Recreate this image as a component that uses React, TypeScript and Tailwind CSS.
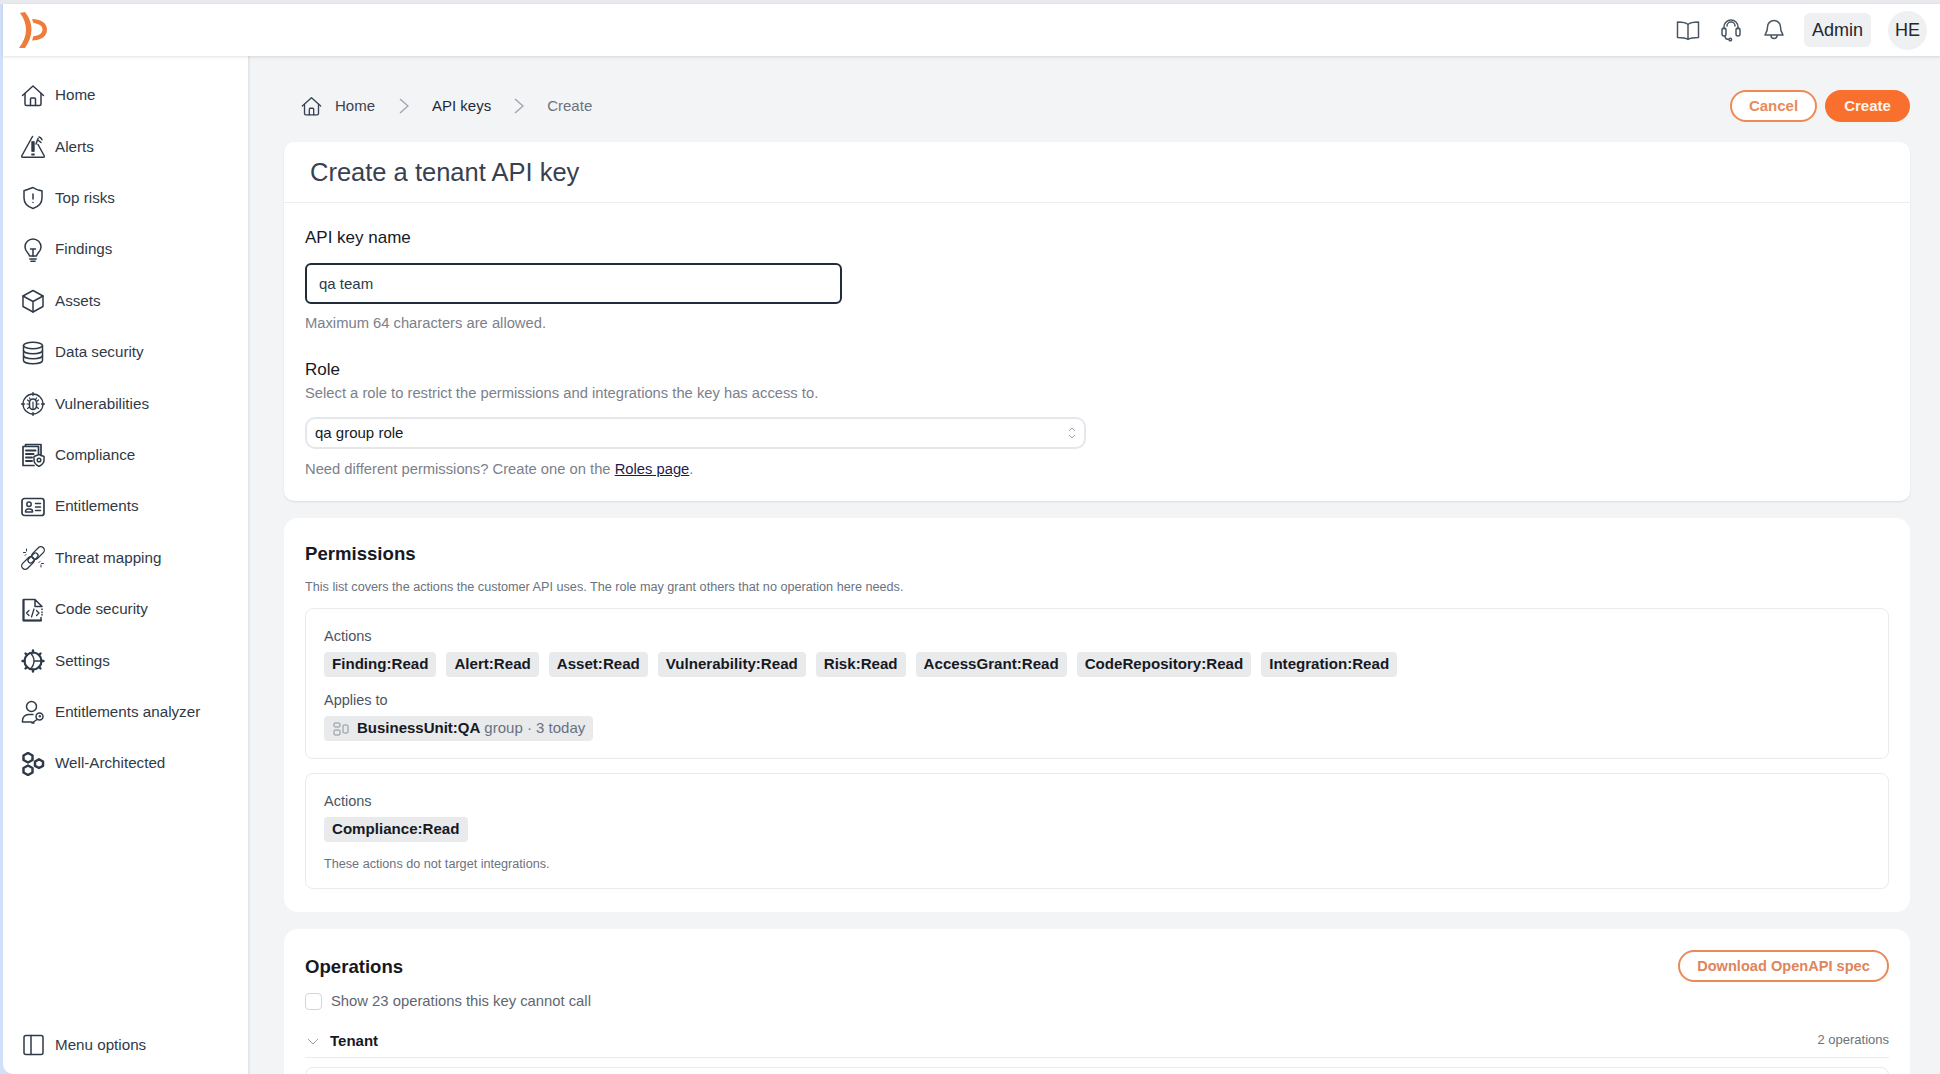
import type { ReactNode } from "react"

const font = "font-['Liberation_Sans',Arial,sans-serif]"

function Ico({ children, size = 24, cls = "text-[#2f3a48]", sw = 1.5 }: { children: ReactNode, size?: number, cls?: string, sw?: number }) {
    return (
        <svg width={size} height={size} viewBox="0 0 24 24" fill="none" stroke="currentColor" strokeWidth={sw} strokeLinecap="round" strokeLinejoin="round" className={`shrink-0 ${cls}`}>
            {children}
        </svg>
    )
}

const homePath = (
    <>
        <path d="M1.5 11.5 12 2l10.5 9.5" />
        <path d="M4 9.5V20a1.5 1.5 0 0 0 1.5 1.5h13A1.5 1.5 0 0 0 20 20V9.5" />
        <path d="M9.5 21.5V15a1 1 0 0 1 1-1h3a1 1 0 0 1 1 1v6.5" />
    </>
)

const navItems: { label: string, icon: ReactNode }[] = [
    { label: "Home", icon: homePath },
    {
        label: "Alerts", icon: <>
            <path d="M11.5 1.500.7 21a.9.9 0 0 0 .8 1.300h21a.9.9 0 0 0 .8-1.300L17 9.500" />
            <path d="M11.200 7v9M12.800 7v9M11 19.500h2" strokeWidth={1.8} />
            <path d="M15 9l2-5.500M17.500 5.500l2.500 2M18 2c1.200.3 2.400 1.300 3 2.800" />
        </>
    },
    {
        label: "Top risks", icon: <>
            <path d="M12 1.500 3 4.800V12c0 5 4 8.800 9 10.500 5-1.700 9-5.500 9-10.500V4.800c-3.500 0-6-1.300-9-3.300Z" />
            <path d="M12 8v5M12 16.500v.1" />
        </>
    },
    {
        label: "Findings", icon: <>
            <path d="M8.500 18c0-2.500-4.500-4-4.500-9a8 8 0 0 1 16 0c0 5-4.500 6.500-4.500 9Z" />
            <path d="M8.800 21h6.400M10 23.300h4M9.500 11h5M12 11v7" />
        </>
    },
    {
        label: "Assets", icon: <>
            <path d="M12 1.500 2 7v10.500L12 23l10-5.500V7Z" />
            <path d="M2 7l10 5.500L22 7M12 12.500V23" />
        </>
    },
    {
        label: "Data security", icon: <>
            <ellipse cx="12" cy="4.500" rx="9.500" ry="3.200" />
            <path d="M2.500 4.500v15c0 1.800 4.200 3.200 9.500 3.200s9.500-1.400 9.500-3.200v-15" />
            <path d="M2.500 9.500c0 1.800 4.200 3.200 9.500 3.200s9.500-1.400 9.500-3.200M2.500 14.500c0 1.800 4.200 3.200 9.500 3.200s9.500-1.400 9.500-3.200" />
        </>
    },
    {
        label: "Vulnerabilities", icon: <>
            <circle cx="12" cy="12" r="10" strokeWidth={1.3} />
            <path d="M12 .5v3M12 20.500v3M.5 12h3M20.500 12h3" strokeWidth={1.3} />
            <path d="M8.500 10.500a3.500 3.500 0 0 1 7 0V14a3.500 3.500 0 0 1-7 0Z" />
            <path d="M9.500 7.800 8.500 6M14.500 7.800l1-1.800M12 10v7.500M8.500 12H6M15.500 12H18M8.500 15 6.500 16.500M15.500 15l2 1.500M8.500 9.500 6.500 8M15.500 9.500l2-1.500" strokeWidth={1.2} />
        </>
    },
    {
        label: "Compliance", icon: <>
            <path d="M4.500 1.500H20v11M4.500 1.500v2M13 22.500H2V3.500h15.500v7.500" strokeWidth={1.7} />
            <path d="M5 7.500h9.500M5 11h7.500M5 14.500h6M5 18h6" strokeWidth={2} />
            <path d="M18 11.500l5 2v4c0 2.500-2.500 4.500-5 6-2.500-1.500-5-3.500-5-6v-4Z" />
            <circle cx="18" cy="17" r="1.800" />
        </>
    },
    {
        label: "Entitlements", icon: <>
            <rect x="1" y="3.500" width="22" height="17" rx="2.500" strokeWidth={1.7} />
            <circle cx="8" cy="9.300" r="2.200" />
            <path d="M4.500 17v-.5a2.500 2.500 0 0 1 2.500-2.500h2a2.500 2.500 0 0 1 2.500 2.500v.5ZM14.500 8.500h5M14.500 12h5M14.500 15.500h5" />
        </>
    },
    {
        label: "Threat mapping", icon: <>
            <rect x="13.500" y="-.5" width="7" height="15" rx="3.500" transform="rotate(45 17 7)" strokeWidth={1.3} />
            <rect x="3.500" y="9.500" width="7" height="15" rx="3.500" transform="rotate(45 7 17)" strokeWidth={1.3} />
            <rect x="9.500" y="6" width="5" height="12" rx="2.500" transform="rotate(45 12 12)" strokeWidth={1.3} />
            <path d="M5.500 3v2M2.500 6.500h2M4 9.500l1-1M20 21v-2M22.500 17.500h-2M19 15.500l-1 1" strokeWidth={1} />
        </>
    },
    {
        label: "Code security", icon: <>
            <path d="M14 1.500H2.500v21H20v-3M14 1.500l7 7H14ZM21 11v.5M21 14v.5M21 16.500v.5" />
            <path d="M8 12.500l-2.500 2.500L8 17.500M15.500 12.500l2.500 2.500-2.500 2.500M13 11l-2.500 8" strokeWidth={1.3} />
            <path d="M2.500 22.500H20M2.500 2v20.500" strokeWidth={2} />
        </>
    },
    {
        label: "Settings", icon: <>
            <circle cx="12" cy="12" r="8.500" strokeWidth={2.200} />
            <path d="M12 1.500V3.500M12 20.500v2M1.500 12h2M20.500 12h2M4.500 4.500 6 6M18 18l1.500 1.500M4.500 19.500 6 18M18 6l1.500-1.500" strokeWidth={2.400} />
            <path d="M9 3.800c3 2.500 4 5.200 4 8.200s-1 5.700-4 8.200M13 12h7.500" strokeWidth={1.400} />
        </>
    },
    {
        label: "Entitlements analyzer", icon: <>
            <circle cx="10.500" cy="6.500" r="5" />
            <path d="M12 14.500H7.500A6 6 0 0 0 1.500 20.500v1.500H11" />
            <circle cx="18.500" cy="16.500" r="3.500" />
            <path d="M16 19.500 11 23h2" />
            <circle cx="18.800" cy="16.200" r=".5" />
        </>
    },
    {
        label: "Well-Architected", icon: <>
            <path d="M7 1 11.500 3.500v4.500L7 10.500 2.500 8V3.500Z" strokeWidth={2.500} />
            <path d="M7 13.500l4.500 2.500v4.500L7 23l-4.500-2.500V16Z" strokeWidth={2.500} />
            <path d="M18 7.300l4 2.200v4.300l-4 2.200-4-2.200V9.500Z" strokeWidth={2.500} />
        </>
    },
]

const actions = ["Finding:Read", "Alert:Read", "Asset:Read", "Vulnerability:Read", "Risk:Read", "AccessGrant:Read", "CodeRepository:Read", "Integration:Read"]

function Chip({ children }: { children: ReactNode }) {
    return <span className="flex h-[25px] items-center rounded-[4px] bg-[#e9eaec] px-2 text-[15.1px] font-bold text-[#16191f]">{children}</span>
}

function Logo() {
    return (
        <svg width="30" height="36" viewBox="0 0 30 36" fill="#ee7c3c">
            <path d="M2 1 7 0c4 5 6.500 11 6.500 17.500S11 30 7 36H1c4.500-6 7-12 7-18S6 6 2 1Z" />
            <path d="M14 7c8 0 15 3.500 15 10.500S23 28.500 14 28.500l1.500-4.500c5 0 9-2.500 9-6.500S20 11.500 15.500 11Z" />
        </svg>
    )
}

export default function App() {
    return (
        <div className={`${font} flex h-[1074px] w-[1940px] flex-col overflow-hidden bg-[#f3f4f6]`}>
            <div className="h-[4px] shrink-0 bg-[#e8e9ec]"></div>
            <div className="flex min-h-0 flex-1 bg-[#cfe0f8] pl-[3px]">
                <div className="flex min-w-0 flex-1 flex-col">
                    <header className="relative z-10 flex h-[52px] shrink-0 items-center bg-white pl-[15px] pr-[13px] shadow-[0_1px_3px_rgba(0,0,0,0.12)]">
                        <Logo />
                        <div className="ml-auto flex items-center">
                            <Ico cls="text-[#4b5563]">
                                <path d="M12 6.500C10 4.500 7 4 1.500 4v15.500c5.500 0 8.500.5 10.500 2 2-1.500 5-2 10.500-2V4C17 4 14 4.500 12 6.500ZM12 6.500v15" />
                            </Ico>
                            <div className="ml-[19px]">
                                <Ico cls="text-[#4b5563]">
                                    <path d="M5 11V9a7 7 0 0 1 14 0v2" />
                                    <rect x="3" y="10" width="4" height="8" rx="2" />
                                    <rect x="17" y="10" width="4" height="8" rx="2" />
                                    <path d="M8 8a4 4 0 0 1 8 0M6 18c0 2 1 3.500 4 3.500M10 21.500a1.300 1.300 0 1 0 2.600 0 1.300 1.300 0 0 0-2.600 0Z" />
                                </Ico>
                            </div>
                            <div className="ml-[19px]">
                                <Ico cls="text-[#4b5563]">
                                    <path d="M12 2.500a6.500 6.500 0 0 0-6.500 6.500c0 5.500-2.500 7-2.500 8h18c0-1-2.500-2.500-2.500-8A6.500 6.500 0 0 0 12 2.500Z" />
                                    <path d="M9 17.500a3 3 0 0 0 6 0" />
                                </Ico>
                            </div>
                            <div className="ml-[18px] flex h-[34px] w-[67px] items-center justify-center rounded-[6px] bg-[#eef0f2] text-[18px] text-[#23272e]">Admin</div>
                            <div className="ml-[17px] flex size-[39px] items-center justify-center rounded-full bg-[#eef0f2] text-[18px] text-[#23272e]">HE</div>
                        </div>
                    </header>
                    <div className="flex min-h-0 flex-1">
                        <aside className="flex w-[247px] shrink-0 flex-col rounded-bl-[10px] border-r-2 border-[#e3e6ea] bg-white pb-[3px] pl-[18px] pt-[14px]">
                            {navItems.map((item, _) => (
                                <div key={_} className="flex h-[51.4px] items-center gap-[10px] text-[15.2px] text-[#2f3a48]">
                                    <Ico>{item.icon}</Ico>
                                    <span>{item.label}</span>
                                </div>
                            ))}
                            <div className="mt-auto flex h-[51.4px] items-center gap-[10px] text-[15.2px] text-[#2f3a48]">
                                <Ico>
                                    <rect x="3" y="2.500" width="19" height="19" rx="2" />
                                    <path d="M10 2.500v19" />
                                </Ico>
                                <span>Menu options</span>
                            </div>
                        </aside>
                        <main className="min-w-0 flex-1 bg-[#f3f4f6] pl-[34px] pr-[30px]">
                            <div className="flex h-[32px] mt-[34px] items-center text-[15px]">
                                <div className="ml-[17px]">
                                    <Ico size={21} cls="text-[#374151]">{homePath}</Ico>
                                </div>
                                <span className="ml-[13px] text-[#374151]">Home</span>
                                <svg width="10" height="16" viewBox="0 0 10 16" fill="none" stroke="#9ca3af" strokeWidth="1.300" className="ml-[24px]"><path d="m1 1 8 7-8 7" /></svg>
                                <span className="ml-[23px] text-[#1f2937]">API keys</span>
                                <svg width="10" height="16" viewBox="0 0 10 16" fill="none" stroke="#9ca3af" strokeWidth="1.300" className="ml-[23px]"><path d="m1 1 8 7-8 7" /></svg>
                                <span className="ml-[23px] text-[#6b7280]">Create</span>
                                <button className="ml-auto flex h-[32px] w-[87px] items-center justify-center rounded-full border-2 border-[#f08a54] bg-white text-[15px] font-bold text-[#e88b5c]">Cancel</button>
                                <button className="ml-[8px] flex h-[32px] w-[85px] items-center justify-center rounded-full bg-[#f9702e] text-[15px] font-bold text-[#fff3ea]">Create</button>
                            </div>

                            <section className="mt-[20px] rounded-[10px] bg-white shadow-[0_1px_2px_rgba(0,0,0,0.10)]">
                                <div className="flex h-[61px] items-center border-b border-[#eceef0] pl-[26px] text-[25.5px] text-[#374151]">Create a tenant API key</div>
                                <div className="px-[21px] pb-[22px] pt-[23px]">
                                    <div className="h-[24px] text-[17px] leading-[24px] text-[#16191f]">API key name</div>
                                    <div className="mt-[13px] flex h-[41px] w-[537px] items-center rounded-[6px] border-2 border-[#202c3a] pl-[12px] pt-[1px] text-[15px] text-[#2f3a48]">qa team</div>
                                    <div className="mt-[9px] h-[20px] text-[14.75px] leading-[20px] text-[#7b818b]">Maximum 64 characters are allowed.</div>
                                    <div className="mt-[25px] h-[24px] text-[17px] leading-[24px] text-[#16191f]">Role</div>
                                    <div className="mt-[1px] h-[20px] text-[14.75px] leading-[20px] text-[#7b818b]">Select a role to restrict the permissions and integrations the key has access to.</div>
                                    <div className="mt-[14px] flex h-[32px] w-[781px] items-center justify-between rounded-[10px] border-2 border-[#e5e7ea] pl-[8px] pr-[8px] text-[15px] text-[#16191f]">
                                        <span>qa group role</span>
                                        <svg width="8" height="14" viewBox="0 0 8 14" fill="none" stroke="#9ca3af" strokeWidth="1"><path d="m1 5 3-3 3 3M1 9l3 3 3-3" /></svg>
                                    </div>
                                    <div className="mt-[10px] h-[20px] text-[14.75px] leading-[20px] text-[#7b818b]">Need different permissions? Create one on the <span className="text-[#1e1b4b] underline">Roles page</span>.</div>
                                </div>
                            </section>

                            <section className="mt-[17px] rounded-[14px] bg-white px-[21px] pb-[23px] pt-[22px]">
                                <div className="h-[28px] text-[18.6px] font-bold leading-[28px] text-[#16191f]">Permissions</div>
                                <div className="mt-[10px] h-[18px] text-[12.65px] leading-[18px] text-[#6b7280]">This list covers the actions the customer API uses. The role may grant others that no operation here needs.</div>
                                <div className="mt-[12px] h-[151px] rounded-[8px] border border-[#e9ebee] px-[18px] pt-[17px]">
                                    <div className="h-[20px] text-[14.5px] leading-[20px] text-[#4b5563]">Actions</div>
                                    <div className="mt-[6px] flex gap-[10px]">
                                        {actions.map((a, _) => <Chip key={_}>{a}</Chip>)}
                                    </div>
                                    <div className="mt-[13px] h-[20px] text-[14.5px] leading-[20px] text-[#4b5563]">Applies to</div>
                                    <div className="mt-[6px] flex">
                                        <span className="flex h-[25px] items-center rounded-[4px] bg-[#e9eaec] pl-[9px] pr-[8px] text-[15px]">
                                            <svg width="16" height="14" viewBox="0 0 16 14" fill="none" stroke="#8b9099" strokeWidth="1"><rect x="1" y="1" width="6" height="4" rx="1" /><rect x="1" y="8" width="6" height="5" rx="1" /><rect x="10" y="3" width="5" height="8" rx="1" /></svg>
                                            <span className="ml-[8px] font-bold text-[#16191f]">BusinessUnit:QA</span>
                                            <span className="ml-[4px] text-[#6b7280]">group · 3 today</span>
                                        </span>
                                    </div>
                                </div>
                                <div className="mt-[14px] h-[116px] rounded-[8px] border border-[#e9ebee] px-[18px] pt-[17px]">
                                    <div className="h-[20px] text-[14.5px] leading-[20px] text-[#4b5563]">Actions</div>
                                    <div className="mt-[6px] flex"><Chip>Compliance:Read</Chip></div>
                                    <div className="mt-[13px] h-[18px] text-[12.65px] leading-[18px] text-[#6b7280]">These actions do not target integrations.</div>
                                </div>
                            </section>

                            <section className="mt-[17px] rounded-t-[14px] bg-white px-[21px] pt-[21px]">
                                <div className="flex h-[32px] items-center justify-between">
                                    <div className="pt-[1px] text-[18.6px] font-bold text-[#16191f]">Operations</div>
                                    <button className="flex h-[32px] w-[211px] items-center justify-center rounded-full border-2 border-[#e98a58] pt-[1px] text-[14.6px] font-bold text-[#e0855a]">Download OpenAPI spec</button>
                                </div>
                                <div className="mt-[11px] flex h-[17px] items-center">
                                    <span className="size-[17px] rounded-[4px] border border-[#d1d5db]"></span>
                                    <span className="ml-[9px] text-[14.8px] text-[#5f6671]">Show 23 operations this key cannot call</span>
                                </div>
                                <div className="mt-[13px] flex h-[35px] items-start justify-between border-b border-[#e9ebee] pt-[7px]">
                                    <div className="flex items-center">
                                        <svg width="12" height="7" viewBox="0 0 12 7" fill="none" stroke="#9ca3af" strokeWidth="1" className="ml-[2px]"><path d="m1 1 5 5 5-5" /></svg>
                                        <span className="ml-[11px] text-[15px] font-bold text-[#16191f]">Tenant</span>
                                    </div>
                                    <span className="text-[13px] text-[#6b7280]">2 operations</span>
                                </div>
                                <div className="mt-[9px] h-[30px] rounded-t-[8px] border border-[#e9ebee]"></div>
                            </section>
                        </main>
                    </div>
                </div>
            </div>
        </div>
    )
}
